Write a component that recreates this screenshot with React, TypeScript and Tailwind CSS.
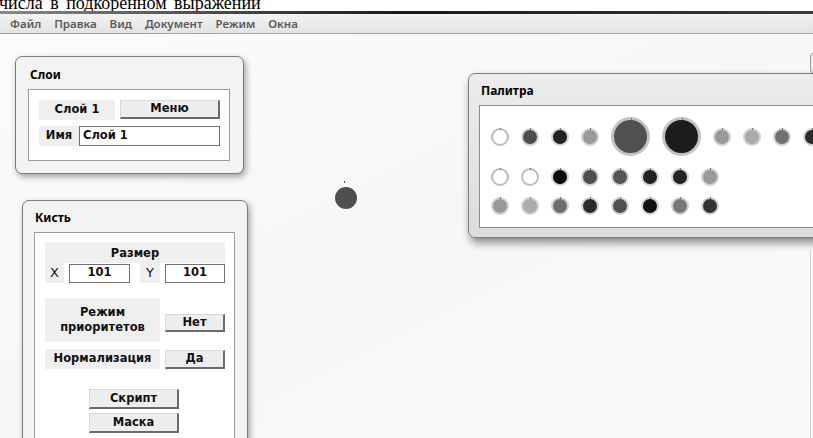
import React from "react";

const ui = { fontFamily: '"DejaVu Sans", "Noto Sans", sans-serif' };
const head = { fontFamily: '"Noto Sans", "DejaVu Sans", sans-serif' };

const menu = ["Файл", "Правка", "Вид", "Документ", "Режим", "Окна"];

type Swatch = { fill: string; big?: boolean; white?: boolean };

const rows: Swatch[][] = [
  [
    { fill: "bg-white", white: true },
    { fill: "bg-[#4d4d4d]" },
    { fill: "bg-[#222222]" },
    { fill: "bg-[#9a9a9a]" },
    { fill: "bg-[#505050]", big: true },
    { fill: "bg-[#1c1c1c]", big: true },
    { fill: "bg-[#999999]" },
    { fill: "bg-[#ababab]" },
    { fill: "bg-[#707070]" },
    { fill: "bg-[#2a2a2a]" },
  ],
  [
    { fill: "bg-white", white: true },
    { fill: "bg-white", white: true },
    { fill: "bg-[#080808]" },
    { fill: "bg-[#4f4f4f]" },
    { fill: "bg-[#555555]" },
    { fill: "bg-[#222222]" },
    { fill: "bg-[#242424]" },
    { fill: "bg-[#9a9a9a]" },
  ],
  [
    { fill: "bg-[#999999]" },
    { fill: "bg-[#ababab]" },
    { fill: "bg-[#6f6f6f]" },
    { fill: "bg-[#2a2a2a]" },
    { fill: "bg-[#505050]" },
    { fill: "bg-[#111111]" },
    { fill: "bg-[#777777]" },
    { fill: "bg-[#333333]" },
  ],
];

function Dot({ s }: { s: Swatch }) {
  const size = s.big ? "w-[39px] h-[39px] border-[3px] border-[#c3c3c3]" : "w-[18px] h-[18px] border-2";
  const ring = s.big ? "" : s.white ? "border-[#bdbdbd]" : "border-[#d2d2d2]";
  return (
    <span className={`relative shrink-0 rounded-full ${size} ${ring} ${s.fill}`}>
      <span className="absolute left-1/2 -top-[2px] w-px h-[2px] bg-[#777]" />
    </span>
  );
}

function Btn({ children, className }: { children: React.ReactNode; className: string }) {
  return (
    <div
      className={`flex items-center justify-center bg-[#eeeeee] border-t border-l border-t-[#d8d8d8] border-l-[#d8d8d8] border-b-2 border-r-2 border-b-[#6a6a6a] border-r-[#6a6a6a] text-[11.5px] font-bold text-[#111] ${className}`}
    >
      {children}
    </div>
  );
}

function Label({ children, className }: { children: React.ReactNode; className: string }) {
  return (
    <div className={`flex items-center justify-center bg-[#efefef] text-[11.5px] font-bold text-[#111] ${className}`}>
      {children}
    </div>
  );
}

function Field({ children, className }: { children: React.ReactNode; className: string }) {
  return (
    <div className={`flex items-center bg-white border border-[#707070] text-[11.5px] font-bold text-[#111] ${className}`}>
      {children}
    </div>
  );
}

const panel =
  "absolute rounded-[7px] border border-[#7c7c7c] shadow-[2px_3px_6px_rgba(0,0,0,0.35)]";

export default function App() {
  return (
    <div className="w-[813px] h-[438px] overflow-hidden flex flex-col bg-[#f9f9f9]" style={ui}>
      {/* caption line above the editor window */}
      <div className="h-[11px] shrink-0 overflow-hidden bg-white">
        <div
          className="mt-[-6px] ml-[-1px] text-[18px] leading-[18px] text-black whitespace-nowrap [word-spacing:3px]"
          style={{ fontFamily: '"Liberation Serif", serif' }}
        >
          числа в подкоренном выражении
        </div>
      </div>
      <div className="h-[3px] shrink-0 bg-linear-to-r from-[#8a8a8a] via-[#1a1a1a] to-[#3a3a3a]" />

      {/* menu bar */}
      <div
        className="h-[20px] shrink-0 flex items-center gap-[13px] pl-[10px] bg-linear-to-b from-[#f3f3f3] to-[#e3e3e3] border-b border-[#a4a4a4] text-[11.5px] font-semibold text-[#5a5a5a]"
        style={head}
      >
        {menu.map((m) => (
          <span key={m}>{m}</span>
        ))}
      </div>

      {/* workspace */}
      <div className="relative flex-1 bg-linear-to-br from-[#fbfbfb] via-[#f7f7f7] to-[#fafafa]">
        {/* brush stroke on the canvas */}
        <span className="absolute left-[344px] top-[147px] w-px h-[2px] bg-[#555]" />
        <span className="absolute left-[335px] top-[153px] w-[22px] h-[22px] rounded-full bg-[#4f4f4f]" />

        {/* edge of another window */}
        <div className="absolute left-[810px] top-[19px] w-[12px] h-[20px] rounded-[3px] border border-[#9a9a9a] bg-[#eeeeee]" />
        <div className="absolute left-[810px] top-[216px] w-px h-[200px] bg-[#d0d0d0]" />

        {/* Layers */}
        <div className={`${panel} left-[15px] top-[22px] w-[229px] h-[118px] bg-[#f3f3f3] flex flex-col`}>
          <div className="h-[32px] pl-[14px] pt-[9px] text-[12px] font-bold text-black" style={head}>
            Слои
          </div>
          <div className="ml-[12px] w-[202px] h-[72px] bg-white border border-[#9c9c9c] pl-[10px] pt-[10px] flex flex-col gap-[6px]">
            <div className="flex gap-[5px]">
              <Label className="w-[76px] h-[20px]">Слой 1</Label>
              <Btn className="w-[100px] h-[19px]">Меню</Btn>
            </div>
            <div className="flex">
              <Label className="w-[40px] h-[20px]">Имя</Label>
              <Field className="w-[141px] h-[20px] pl-[3px]">Слой 1</Field>
            </div>
          </div>
        </div>

        {/* Brush */}
        <div className={`${panel} left-[22px] top-[166px] w-[226px] h-[280px] bg-[#f3f3f3] flex flex-col`}>
          <div className="h-[31px] pl-[12px] pt-[8px] text-[12px] font-bold text-black" style={head}>
            Кисть
          </div>
          <div className="ml-[11px] w-[201px] h-[210px] bg-white border border-[#9c9c9c] pl-[10px] pt-[9px] flex flex-col">
            <div className="w-[180px] flex flex-col">
              <Label className="h-[21px] pt-[2px]">Размер</Label>
              <div className="flex items-center">
                <Label className="w-[19px] h-[20px] font-normal text-[13px]">X</Label>
                <Field className="ml-[5px] w-[61px] h-[19px] justify-center">101</Field>
                <Label className="ml-[10px] w-[20px] h-[20px] font-normal text-[13px]">Y</Label>
                <Field className="ml-[5px] w-[60px] h-[19px] justify-center">101</Field>
              </div>
            </div>

            <div className="mt-[15px] flex items-start">
              <Label className="w-[115px] h-[44px] flex-col leading-[15px]">
                <span>Режим</span>
                <span>приоритетов</span>
              </Label>
              <Btn className="ml-[5px] mt-[16px] w-[60px] h-[18px]">Нет</Btn>
            </div>

            <div className="mt-[7px] flex items-center">
              <Label className="w-[115px] h-[20px]">Нормализация</Label>
              <Btn className="ml-[5px] w-[60px] h-[19px]">Да</Btn>
            </div>

            <div className="mt-[20px] ml-[44px] flex flex-col gap-[4px]">
              <Btn className="w-[90px] h-[20px]">Скрипт</Btn>
              <Btn className="w-[90px] h-[20px]">Маска</Btn>
            </div>
          </div>
        </div>

        {/* Palette */}
        <div
          className={`${panel} left-[468px] top-[39px] w-[370px] h-[165px] bg-linear-to-b from-[#ececec] via-[#e4e4e4] to-[#dcdcdc] shadow-[2px_5px_8px_rgba(0,0,0,0.45)] flex flex-col`}
        >
          <div className="h-[31px] pl-[12px] pt-[8px] text-[12px] font-bold text-black" style={head}>
            Палитра
          </div>
          <div className="ml-[10px] h-[123px] bg-white border border-[#8c8c8c] pl-[11px] pt-[11px] flex flex-col gap-[11px]">
            {rows.map((r, i) => (
              <div key={i} className={`flex items-center gap-[12px] ${i === 1 ? "mt-[1px]" : ""}`}>
                {r.map((s, j) => (
                  <Dot key={j} s={s} />
                ))}
              </div>
            ))}
          </div>
        </div>
      </div>
    </div>
  );
}
